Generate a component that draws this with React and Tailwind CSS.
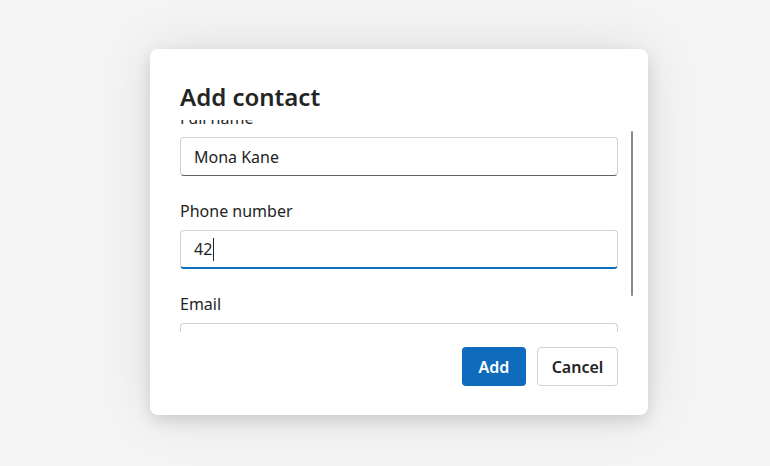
// Add contact dialog: scrolled field list + footer actions

const font = "font-['Noto_Sans','Open_Sans',sans-serif]"

function Field({ label, value, focused, caret }) {
  return (
    <div className="flex flex-col gap-[8px]">
      <label className="text-[16px] leading-[22px] text-[#242424]">{label}</label>
      <div
        className={
          'h-[39px] rounded-[4px] border border-[#d1d1d1] bg-white flex items-center px-[13px] text-[16px] text-[#242424] ' +
          (focused ? 'border-b-2 border-b-[#0f6cbd]' : 'border-b-[#616161]')
        }
      >
        <span>{value}</span>
        {caret && <span className="w-px h-[23px] bg-[#242424] ml-[1px]" />}
      </div>
    </div>
  )
}

export default function App() {
  return (
    <div className={`w-[770px] h-[466px] bg-[#f5f5f5] pt-[49px] pl-[150px] ${font}`}>
      <div className="w-[498px] h-[366px] bg-white rounded-[8px] shadow-[0_0_60px_rgba(0,0,0,0.10),0_6px_16px_rgba(0,0,0,0.12)] px-[30px] pt-[30px] pb-[29px] flex flex-col">
        <h1 className="text-[24px] leading-[36px] font-semibold text-[#242424] m-0">Add contact</h1>

        {/* scroll viewport, content is offset as if scrolled down a bit */}
        <div className="relative h-[212px] mt-[5px] overflow-hidden -mr-[30px] pr-[30px]">
          <div className="-mt-[13px] flex flex-col gap-[24px]">
            <Field label="Full name" value="Mona Kane" />
            <Field label="Phone number" value="42" focused caret />
            <Field label="Email" value="" />
          </div>
          <div className="absolute right-[15px] top-[11px] w-[2px] h-[165px] rounded-full bg-[#8a8a8a]" />
        </div>

        <div className="mt-auto flex justify-end gap-[11px]">
          <button className="h-[39px] w-[64px] rounded-[4px] bg-[#0f6cbd] text-white text-[16px] font-semibold">
            Add
          </button>
          <button className="h-[39px] w-[81px] rounded-[4px] border border-[#d1d1d1] bg-white text-[#242424] text-[16px] font-semibold">
            Cancel
          </button>
        </div>
      </div>
    </div>
  )
}
